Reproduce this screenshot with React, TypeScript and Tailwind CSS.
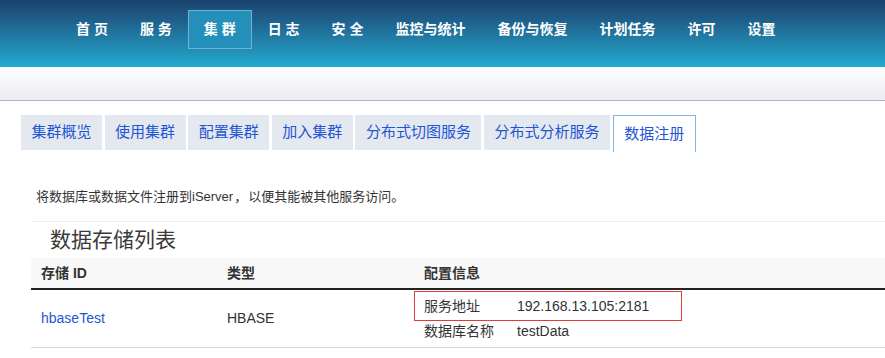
import React from 'react';

const navItems = ['首 页', '服 务', '集 群', '日 志', '安 全', '监控与统计', '备份与恢复', '计划任务', '许可', '设置'];
const tabs = ['集群概览', '使用集群', '配置集群', '加入集群', '分布式切图服务', '分布式分析服务', '数据注册'];

const font = { fontFamily: '"Liberation Sans", "Noto Sans CJK SC", sans-serif' };

export default function App() {
  return (
    <div className="w-[885px] h-[358px] overflow-hidden bg-white text-[#333]" style={font}>
      {/* top navigation */}
      <div className="h-[67px] bg-gradient-to-b from-[#1a426e] to-[#23abd1] flex items-start pt-[10px] pl-[60px]">
        {navItems.map((item) => (
          <div
            key={item}
            className={
              'h-[39px] px-4 flex items-center text-[14px] font-bold text-white whitespace-pre ' +
              (item === '集 群' ? 'bg-[#2490b9] border border-[#6fb2d6] px-[15px]' : '')
            }
          >
            {item}
          </div>
        ))}
      </div>
      <div className="h-[34px] bg-gradient-to-b from-white to-[#ebecef] border-b border-[#aab6c8]" />

      {/* tabs */}
      <div className="mt-[14px] ml-[21px] h-[37px] flex items-start gap-[2.6px]">
        {tabs.map((t) => (
          <div
            key={t}
            className={
              'px-[10.5px] flex items-center text-[15px] text-[#1f56d4] ' +
              (t === '数据注册'
                ? 'h-[37px] bg-white border border-b-0 border-[#80b6e4] px-[9.5px]'
                : 'h-[35px] bg-[#e4e8ef]')
            }
          >
            {t}
          </div>
        ))}
      </div>

      <p className="mt-[36px] pl-[36px] text-[13px] leading-[18px] text-[#333]">
        将数据库或数据文件注册到iServer<span className="inline-block w-[15px] text-center">，</span>以便其能被其他服务访问。
      </p>

      <div className="ml-[31px] mt-[15px] border-t border-[#ececec]">
        <div className="h-[36px] flex items-center pl-[19px] text-[21px] text-[#3a3a3a]">数据存储列表</div>

        <div className="h-[32px] bg-[#f8f8f8] border-b-2 border-[#222] flex items-center text-[14px] font-bold text-[#333]">
          <div className="w-[186px] pl-[10px]">存储 ID</div>
          <div className="w-[197px] pl-[10px]">类型</div>
          <div className="pl-[10px]">配置信息</div>
        </div>

        <div className="h-[58px] border-b border-[#d6d6d6] flex items-center text-[14px]">
          <div className="w-[186px] pl-[10px] text-[#1f56d4]">hbaseTest</div>
          <div className="w-[197px] pl-[10px] text-[#333]">HBASE</div>
          <div className="flex flex-col self-start pt-[1px]">
            <div className="w-[268px] h-[30px] border border-[#e53935] flex items-center pl-[9px]">
              <span className="w-[93px]">服务地址</span>
              <span>192.168.13.105:2181</span>
            </div>
            <div className="h-[20px] flex items-center pl-[10px]">
              <span className="w-[93px]">数据库名称</span>
              <span>testData</span>
            </div>
          </div>
        </div>
      </div>
    </div>
  );
}
